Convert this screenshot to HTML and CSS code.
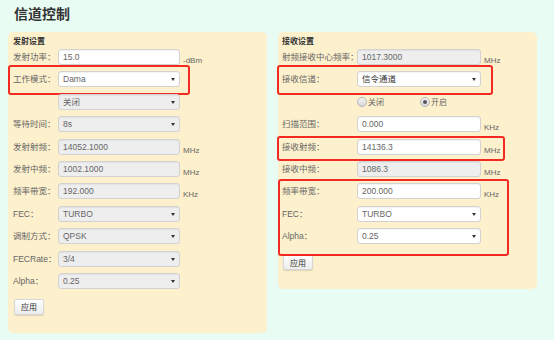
FILE: index.html
```html
<!DOCTYPE html>
<html lang="zh">
<head>
<meta charset="utf-8">
<title>信道控制</title>
<link rel="stylesheet" href="styles.css">
</head>
<body>
<h1 class="title">信道控制</h1>
<div class="panels">
  <section class="panel panel-left">
    <h2 class="panel-head">发射设置</h2>
    <div class="rows">
      <div class="row"><span class="label">发射功率：</span><div class="ctl">15.0</div><span class="unit">-dBm</span></div>
      <div class="row hl hl-mode"><span class="label">工作模式：</span><div class="ctl sel">Dama</div></div>
      <div class="row"><span class="label"></span><div class="ctl sel dis">关闭</div></div>
      <div class="row"><span class="label">等待时间：</span><div class="ctl sel dis">8s</div></div>
      <div class="row"><span class="label">发射射频：</span><div class="ctl dis">14052.1000</div><span class="unit">MHz</span></div>
      <div class="row"><span class="label">发射中频：</span><div class="ctl dis">1002.1000</div><span class="unit">MHz</span></div>
      <div class="row"><span class="label">频率带宽：</span><div class="ctl dis">192.000</div><span class="unit">KHz</span></div>
      <div class="row"><span class="label">FEC：</span><div class="ctl sel dis">TURBO</div></div>
      <div class="row"><span class="label">调制方式：</span><div class="ctl sel dis">QPSK</div></div>
      <div class="row"><span class="label">FECRate：</span><div class="ctl sel dis">3/4</div></div>
      <div class="row"><span class="label">Alpha：</span><div class="ctl sel dis">0.25</div></div>
    </div>
    <button class="btn">应用</button>
  </section>
  <section class="panel panel-right">
    <h2 class="panel-head">接收设置</h2>
    <div class="rows">
      <div class="row"><span class="label">射频接收中心频率：</span><div class="ctl dis">1017.3000</div><span class="unit">MHz</span></div>
      <div class="row hl hl-chan"><span class="label">接收信道：</span><div class="ctl sel strong">信令通道</div></div>
      <div class="row"><span class="label"></span>
        <div class="radios">
          <span class="radio-item"><span class="radio"></span>关闭</span>
          <span class="radio-item"><span class="radio on"></span>开启</span>
        </div>
      </div>
      <div class="row"><span class="label">扫描范围：</span><div class="ctl">0.000</div><span class="unit">KHz</span></div>
      <div class="row hl hl-rf"><span class="label">接收射频：</span><div class="ctl">14136.3</div><span class="unit">MHz</span></div>
      <div class="row"><span class="label">接收中频：</span><div class="ctl dis">1086.3</div><span class="unit">MHz</span></div>
      <div class="group hl hl-group">
        <div class="row"><span class="label">频率带宽：</span><div class="ctl">200.000</div><span class="unit">KHz</span></div>
        <div class="row"><span class="label">FEC：</span><div class="ctl sel">TURBO</div></div>
        <div class="row"><span class="label">Alpha：</span><div class="ctl sel">0.25</div></div>
      </div>
    </div>
    <button class="btn">应用</button>
  </section>
</div>
</body>
</html>
```
FILE: styles.css
```css
* { box-sizing: border-box; }
html, body {
  margin: 0;
  padding: 0;
  background: #e9fcf3;
  font-family: "Liberation Sans", Arial, "Noto Sans CJK SC", sans-serif;
  color: #555;
}
body { width: 554px; height: 340px; overflow: hidden; }
.title {
  margin: 4px 0 8px 14px;
  font-size: 14px;
  line-height: 20px;
  font-weight: bold;
  color: #333;
}
.panels {
  display: flex;
  gap: 11px;
  padding-left: 8px;
  align-items: flex-start;
}
.panel {
  width: 259px;
  background: #fdf0cc;
  border-radius: 5px;
  padding: 4px 5px 18px 5px;
}
.panel-right { padding-bottom: 19px; padding-left: 4px; }
.panel-head {
  margin: 0 0 1px 0;
  font-size: 8px;
  line-height: 12px;
  font-weight: bold;
  color: #333;
}
.rows, .group {
  display: flex;
  flex-direction: column;
  gap: 6.4px;
}
.row {
  display: flex;
  height: 16px;
  align-items: center;
}
.label {
  flex: none;
  width: 45px;
  font-size: 8.5px;
  line-height: 16px;
  color: #666;
  white-space: nowrap;
}
.panel-right .label { width: 75px; }
.ctl {
  position: relative;
  flex: none;
  width: 122px;
  height: 16px;
  border: 1px solid #d2d2d2;
  border-radius: 3px;
  background: #fff;
  font-size: 8.5px;
  line-height: 14px;
  padding-left: 4px;
  color: #666;
  box-shadow: inset 0 1px 1px rgba(0,0,0,0.05);
}
.panel-right .ctl { width: 124px; }
.ctl.dis { background: #eeeeee; }
.ctl.strong { color: #333; }
.sel::after {
  content: "";
  position: absolute;
  right: 4px;
  top: 6px;
  border-left: 2px solid transparent;
  border-right: 2px solid transparent;
  border-top: 3px solid #333;
}
.unit {
  align-self: flex-end;
  margin-left: 3px;
  font-size: 8px;
  line-height: 8px;
  color: #666;
}
.radios {
  display: flex;
  font-size: 8px;
  color: #666;
}
.radio-item {
  display: flex;
  align-items: center;
  width: 63px;
}
.radio {
  position: relative;
  width: 10px;
  height: 10px;
  border-radius: 50%;
  border: 1px solid #b5b5b5;
  background: linear-gradient(#f4f4f4, #d8d8d8);
  margin-right: 1px;
}
.radio.on::after {
  content: "";
  position: absolute;
  left: 2px;
  top: 2px;
  width: 4px;
  height: 4px;
  border-radius: 50%;
  background: #555;
}
.btn {
  display: block;
  margin: 10px 0 0 1px;
  width: 30px;
  height: 16px;
  padding: 0;
  font-family: inherit;
  font-size: 8px;
  color: #333;
  border: 1px solid #d6d6d6;
  border-radius: 2px;
  background: linear-gradient(#ffffff, #ececec);
  box-shadow: 0 1px 1px rgba(0,0,0,0.12);
}
.hl { position: relative; }
.hl::before {
  content: "";
  position: absolute;
  border: 2px solid #f22a22;
  border-radius: 3px;
  pointer-events: none;
}
.hl-mode::before { left: -5px; top: -6.4px; width: 178px; height: 26px; }
.hl-chan::before { left: -5px; top: -6.4px; width: 212px; height: 26px; }
.hl-rf::before { left: -5px; top: -2.6px; width: 224px; height: 21px; }
.hl-group::before { left: -4px; top: -4.4px; width: 227px; height: 73px; }
```
